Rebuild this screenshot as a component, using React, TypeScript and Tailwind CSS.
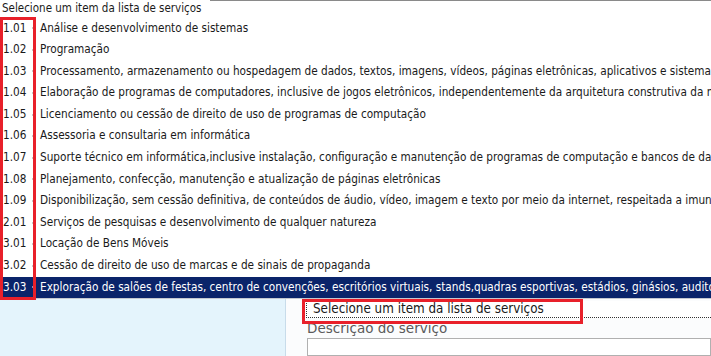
const items = [
  { code: "1.01", desc: "Análise e desenvolvimento de sistemas" },
  { code: "1.02", desc: "Programação" },
  { code: "1.03", desc: "Processamento, armazenamento ou hospedagem de dados, textos, imagens, vídeos, páginas eletrônicas, aplicativos e sistemas de informação" },
  { code: "1.04", desc: "Elaboração de programas de computadores, inclusive de jogos eletrônicos, independentemente da arquitetura construtiva da máquina" },
  { code: "1.05", desc: "Licenciamento ou cessão de direito de uso de programas de computação" },
  { code: "1.06", desc: "Assessoria e consultaria em informática" },
  { code: "1.07", desc: "Suporte técnico em informática,inclusive instalação, configuração e manutenção de programas de computação e bancos de dados" },
  { code: "1.08", desc: "Planejamento, confecção, manutenção e atualização de páginas eletrônicas" },
  { code: "1.09", desc: "Disponibilização, sem cessão definitiva, de conteúdos de áudio, vídeo, imagem e texto por meio da internet, respeitada a imunidade" },
  { code: "2.01", desc: "Serviços de pesquisas e desenvolvimento de qualquer natureza" },
  { code: "3.01", desc: "Locação de Bens Móveis" },
  { code: "3.02", desc: "Cessão de direito de uso de marcas e de sinais de propaganda" },
  { code: "3.03", desc: "Exploração de salões de festas, centro de convenções, escritórios virtuais, stands,quadras esportivas, estádios, ginásios, auditórios" },
];

export default function App() {
  return (
    <div className="relative h-[356px] w-[711px] overflow-hidden bg-white font-['DejaVu_Sans_Condensed','DejaVu_Sans',sans-serif] text-[#1a1a1a]">
      <div className="flex h-[17.5px] items-start">
        <span className="whitespace-nowrap pl-[2px] pt-[1px] text-[11.5px] leading-[14px]">Selecione um item da lista de serviços</span>
        <div className="ml-2 h-px flex-1 bg-[#8a8a8a]" />
      </div>

      <div className="flex flex-col">
        {items.map((it, i) => {
          const sel = i === items.length - 1;
          return (
            <div
              key={it.code}
              className={`flex h-[21.6px] items-center whitespace-nowrap text-[11.7px] ${sel ? "bg-[#0a246a] text-white" : ""}`}
            >
              <span className="w-[32px] shrink-0 pl-[3px]">{it.code}</span>
              <span className={`mr-[7px] h-[2px] w-px shrink-0 ${sel ? "bg-[#8090c0]" : "bg-[#c8c8c8]"}`} />
              <span>{it.desc}</span>
            </div>
          );
        })}
      </div>

      <div className="flex h-[58px] border-t border-[#c4c8d0]">
        <div className="w-[285px] shrink-0 bg-[#e4f4fc]" />
        <div className="w-px shrink-0 bg-[#c8dcea]" />
        <div className="flex flex-1 flex-col bg-[#fbfcfd] pl-[20px]">
          <div className="mt-[2px] flex h-[17px] items-center border-b border-l border-dotted border-[#333] bg-white pl-[6px] text-[13.3px] whitespace-nowrap">
            Selecione um item da lista de serviços
          </div>
          <div className="pl-[1px] pt-[3px] font-['DejaVu_Sans',sans-serif] text-[13.5px] leading-[14px] text-[#5a5a5a]">Descrição do serviço</div>
          <div className="mt-[3px] ml-[1px] flex-1 border border-[#b0b0b0] bg-white" />
        </div>
      </div>

      <div className="absolute left-0 top-[17px] h-[283px] w-[36px] border-[3px] border-[#e8202a]" />
      <div className="absolute left-[302px] top-[299px] h-[25px] w-[281px] border-[3px] border-[#e8202a]" />
    </div>
  );
}
